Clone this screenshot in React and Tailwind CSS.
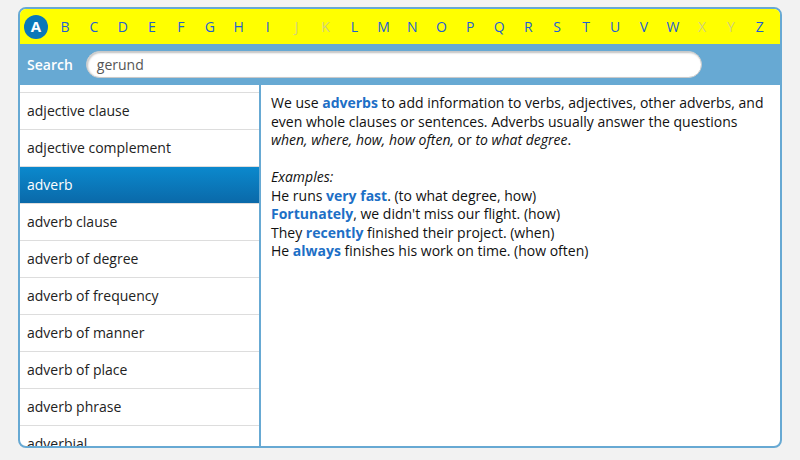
import React from 'react'

const letters = 'ABCDEFGHIJKLMNOPQRSTUVWXYZ'.split('')
const disabled = ['J', 'K', 'X', 'Y']

const terms = [
  'adjective',
  'adjective clause',
  'adjective complement',
  'adverb',
  'adverb clause',
  'adverb of degree',
  'adverb of frequency',
  'adverb of manner',
  'adverb of place',
  'adverb phrase',
  'adverbial',
]

const B = ({ children }) => <b className="font-bold text-[#1d6fc6]">{children}</b>

const App = () => {
  const active = 'A'
  const selected = 'adverb'

  return (
    <div className="w-[800px] h-[460px] bg-[#f2f2f2] pt-[7px] font-['Open_Sans',sans-serif]">
      <div className="mx-auto w-[764px] h-[441px] border-2 border-[#67a9d3] rounded-lg overflow-hidden flex flex-col bg-white">
        {/* alphabet bar */}
        <div className="h-[35px] shrink-0 bg-[#ffff00] flex items-center justify-between pl-1 pr-2">
          {letters.map(l =>
            l === active ? (
              <span
                key={l}
                className="w-6 h-6 rounded-full bg-[#0a78b9] text-white font-bold text-[15px] flex items-center justify-center"
              >
                {l}
              </span>
            ) : (
              <span
                key={l}
                className={`w-6 text-center text-sm ${disabled.includes(l) ? 'text-[#d2d27c]' : 'text-[#1f5fd2]'}`}
              >
                {l}
              </span>
            )
          )}
        </div>

        {/* search */}
        <div className="h-[41px] shrink-0 bg-[#67a9d3] flex items-center pl-[7px] pr-[78px] gap-[13px]">
          <span className="text-white text-sm font-semibold">Search</span>
          <div className="flex-1 h-[27px] bg-white rounded-full border border-[#c9c9c9] shadow-[inset_1px_1px_2px_rgba(0,0,0,0.25)] flex items-center px-[10px] text-sm text-[#555]">
            gerund
          </div>
        </div>

        <div className="flex flex-1 min-h-0">
          {/* term list */}
          <div className="w-[239px] shrink-0 overflow-hidden">
            <ul className="-mt-[29px]">
              {terms.map(t => (
                <li
                  key={t}
                  className={`h-[37px] flex items-center pl-[7px] text-sm border-b border-[#dddddd] ${
                    t === selected
                      ? 'bg-gradient-to-b from-[#0b89cd] to-[#0a69a9] text-white'
                      : 'text-[#222]'
                  }`}
                >
                  {t}
                </li>
              ))}
            </ul>
          </div>

          {/* definition */}
          <div className="flex-1 border-l-2 border-[#67a9d3] pt-[9px] px-[10px] text-sm leading-[18.5px] text-[#111]">
            <p>
              We use <B>adverbs</B> to add information to verbs, adjectives, other adverbs, and even whole clauses or
              sentences. Adverbs usually answer the questions <i>when, where, how, how often,</i> or <i>to what degree</i>.
            </p>
            <p className="mt-[18.5px]">
              <i>Examples:</i>
              <br />
              He runs <B>very fast</B>. (to what degree, how)
              <br />
              <B>Fortunately</B>, we didn't miss our flight. (how)
              <br />
              They <B>recently</B> finished their project. (when)
              <br />
              He <B>always</B> finishes his work on time. (how often)
            </p>
          </div>
        </div>
      </div>
    </div>
  )
}

export default App
